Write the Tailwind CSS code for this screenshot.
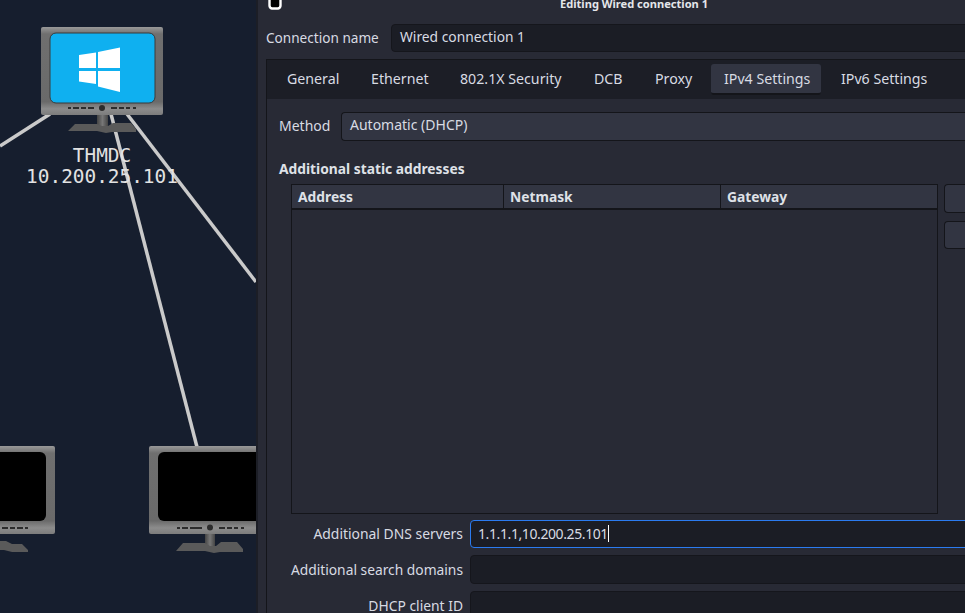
<!DOCTYPE html>
<html lang="en">
<head>
  <meta charset="UTF-8">
  <title>Editing Wired connection 1</title>
  <script src="https://cdn.jsdelivr.net/npm/@tailwindcss/browser@4"></script>
</head>
<body class="w-[965px] h-[613px] overflow-hidden flex bg-[#161e2e] font-['Noto_Sans',sans-serif] text-[14px] text-[#d8dbe3]">
  <!-- Network map -->
  <div class="relative w-[256px] h-full shrink-0 overflow-hidden bg-[#161e2e]">
    <svg class="absolute left-0 top-0" width="256" height="613" viewBox="0 0 256 613">
      <defs>
        <linearGradient id="bezel" x1="0" y1="0" x2="0" y2="1">
          <stop offset="0" stop-color="#999"/>
          <stop offset="0.08" stop-color="#6f6f6f"/>
          <stop offset="0.85" stop-color="#6a6a6a"/>
          <stop offset="0.93" stop-color="#8c8c8c"/>
          <stop offset="1" stop-color="#7c7c7c"/>
        </linearGradient>
        <linearGradient id="stem" x1="0" y1="0" x2="1" y2="0">
          <stop offset="0" stop-color="#444"/>
          <stop offset="0.5" stop-color="#777"/>
          <stop offset="1" stop-color="#444"/>
        </linearGradient>
      </defs>
      <g stroke="#cacaca" stroke-width="3.500" fill="none">
        <path d="M50 114 L0 146"/>
        <path d="M111 114 L197 447"/>
        <path d="M127 114 L256 282"/>
      </g>
      <!-- Windows host -->
      <rect x="41" y="27" width="122" height="88" rx="2" fill="url(#bezel)"/>
      <rect x="50" y="33" width="105" height="70" rx="6" fill="#0fb0f0" stroke="#3a3a3a" stroke-width="1"/>
      <path d="M79 55 L96 52.500 V68 H79 Z M98 52 L120 47.500 V68 H98 Z M79 71 H96 V84 L79 81.500 Z M98 71 H120 V92 L98 86.500 Z" fill="#fff"/>
      <g fill="#2c2c2c">
        <circle cx="102" cy="108" r="3"/>
        <path d="M68 107 h3 v2 h-3 Z M73 107 h6 v2 h-6 Z M81 107 h5 v2 h-5 Z M88 107 h6 v2 h-6 Z M111 107 h6 v2 h-6 Z M119 107 h5 v2 h-5 Z M126 107 h4 v2 h-4 Z M133 107 h3 v2 h-3 Z"/>
      </g>
      <rect x="97" y="115" width="11" height="11" fill="url(#stem)"/>
      <path d="M68 131 L75 124 H97 L102 126 H108 L113 123 H131 L136 129 V132 H112 L106 133 L97 131 H72 Z" fill="#5a5a5a"/>
      <!-- Lower hosts -->
      <g>
        <rect x="-67" y="446" width="122" height="88" rx="2" fill="url(#bezel)"/>
        <rect x="-58" y="452" width="104" height="69" rx="6" fill="#000"/>
        <path d="M2 527 h6 v2 h-6 Z M10 527 h5 v2 h-5 Z M17 527 h6 v2 h-6 Z M25 527 h3 v2 h-3 Z" fill="#2c2c2c"/>
        <path d="M-10 549 L0 541 H6 L12 544 H22 L28 550 V552 H12 L4 550 H-10 Z" fill="#5a5a5a"/>
      </g>
      <g>
        <rect x="149" y="446" width="122" height="88" rx="2" fill="url(#bezel)"/>
        <rect x="158" y="452" width="104" height="69" rx="6" fill="#000"/>
        <g fill="#2c2c2c">
          <circle cx="210" cy="527.500" r="3"/>
          <path d="M177 527 h3 v2 h-3 Z M182 527 h6 v2 h-6 Z M190 527 h12 v2 h-12 Z M219 527 h6 v2 h-6 Z M227 527 h5 v2 h-5 Z M234 527 h4 v2 h-4 Z M241 527 h3 v2 h-3 Z"/>
        </g>
        <rect x="205" y="534" width="10" height="12" fill="url(#stem)"/>
        <path d="M176 551 L183 543 H205 L210 546 H216 L221 542 H237 L243 549 V552 H220 L214 553 L205 551 Z" fill="#5a5a5a"/>
      </g>
    </svg>
    <div class="absolute left-0 w-[204px] top-[145px] text-center font-['DejaVu_Sans_Mono',monospace] text-[#e2e2e2] text-[19.400px] leading-[21px]">THMDC<br>10.200.25.101</div>
  </div>

  <!-- Connection editor dialog -->
  <div class="w-[720px] h-full shrink-0 border-l-[2px] border-[#1c1e26] bg-[#282a35] flex flex-col overflow-hidden">
    <div class="h-[24px] shrink-0 relative">
      <svg class="absolute left-[10px] top-0" width="15" height="10" viewBox="0 0 15 10"><path d="M1.500 0 V5.500 Q1.500 8 4 8.500 H10 Q12.500 8 12.500 5.500 V0" fill="#000" stroke="#fff" stroke-width="2.400"/></svg>
      <div class="absolute left-[302px] top-[-6px] text-[11.100px] leading-[20px] font-bold text-[#e4e6ea] whitespace-nowrap">Editing Wired connection 1</div>
    </div>
    <div class="flex items-center h-[28px] shrink-0 pl-[8px]">
      <div class="w-[125px] shrink-0 text-[13.600px] leading-[26px]">Connection name</div>
      <div class="flex-1 h-full bg-[#1b1d25] border border-[#15161c] rounded-l-[4px] pl-[8px] leading-[24px] text-[13.800px]">Wired connection 1</div>
    </div>
    <div class="mt-[7px] ml-[8px] flex-1 min-h-0 border-t border-l border-[#14151a] flex flex-col">
      <div class="h-[39px] shrink-0 bg-[#1c1e26] flex items-center pl-[4px] text-[14.200px] leading-[18px] whitespace-nowrap">
        <div class="w-[84px] pl-[16px] mt-[-2px]">General</div>
        <div class="w-[89px] pl-[16px] mt-[-2px]">Ethernet</div>
        <div class="w-[134px] pl-[16px] mt-[-2px]">802.1X Security</div>
        <div class="w-[61px] pl-[16px] mt-[-2px]">DCB</div>
        <div class="w-[72px] pl-[16px] mt-[-2px]">Proxy</div>
        <div class="w-[110px] pl-[13px] h-[31px] leading-[29px] bg-[#323542] border-b-[2px] border-[#14151a] rounded-[3px]">IPv4 Settings</div>
        <div class="pl-[20px] mt-[-2px]">IPv6 Settings</div>
      </div>
      <div class="flex-1 min-h-0 pl-[12px] flex flex-col">
        <div class="flex items-center h-[29px] mt-[13px] shrink-0">
          <div class="w-[62px] shrink-0 leading-[24px] mt-[-2px]">Method</div>
          <div class="flex-1 h-full bg-[#323542] border-b border-t border-l border-[#14151a] rounded-l-[4px] pl-[8px] leading-[24px]">Automatic (DHCP)</div>
        </div>
        <div class="mt-[18px] font-bold leading-[19px] text-[#dfe1e7] text-[13.800px]">Additional static addresses</div>
        <div class="mt-[6px] ml-[12px] flex shrink-0">
          <div class="w-[647px] h-[330px] border border-[#14151a] bg-[#282a35]">
            <div class="flex h-[25px] bg-[#323542] border-b-[2px] border-[#14151a] font-bold text-[#dfe1e7] text-[13.800px] leading-[24px]">
              <div class="w-[212px] pl-[6px] border-r border-[#14151a]">Address</div>
              <div class="w-[217px] pl-[6px] border-r border-[#14151a]">Netmask</div>
              <div class="flex-1 pl-[6px]">Gateway</div>
            </div>
          </div>
          <div class="ml-[6px] flex-1 flex flex-col gap-[8px]">
            <div class="h-[29px] bg-[#323542] border-b border-t border-l border-[#14151a] rounded-l-[4px]"></div>
            <div class="h-[28px] bg-[#323542] border-b border-t border-l border-[#14151a] rounded-l-[4px]"></div>
          </div>
        </div>
        <div class="mt-[6px] flex flex-col gap-[7px]">
          <div class="flex items-center h-[28px]">
            <div class="w-[184px] text-right shrink-0 whitespace-nowrap text-[13.900px] leading-[26px]">Additional DNS servers</div>
            <div class="ml-[7px] flex-1 h-full bg-[#1b1d25] border border-[#2b7bf0] rounded-l-[4px] pl-[7px] leading-[25px] text-[14px] tracking-[-0.4px]">1.1.1.1,10.200.25.101<span class="inline-block w-px h-[17px] bg-white align-[-3px]"></span></div>
          </div>
          <div class="flex items-center h-[29px]">
            <div class="w-[184px] text-right shrink-0 whitespace-nowrap text-[13.800px] leading-[26px]">Additional search domains</div>
            <div class="ml-[7px] flex-1 h-full bg-[#1b1d25] border border-[#15161c] rounded-l-[4px]"></div>
          </div>
          <div class="flex items-center h-[29px]">
            <div class="w-[184px] text-right shrink-0 whitespace-nowrap text-[13.850px] leading-[26px]">DHCP client ID</div>
            <div class="ml-[7px] flex-1 h-full bg-[#1b1d25] border border-[#15161c] rounded-l-[4px]"></div>
          </div>
        </div>
      </div>
    </div>
  </div>
</body>
</html>
